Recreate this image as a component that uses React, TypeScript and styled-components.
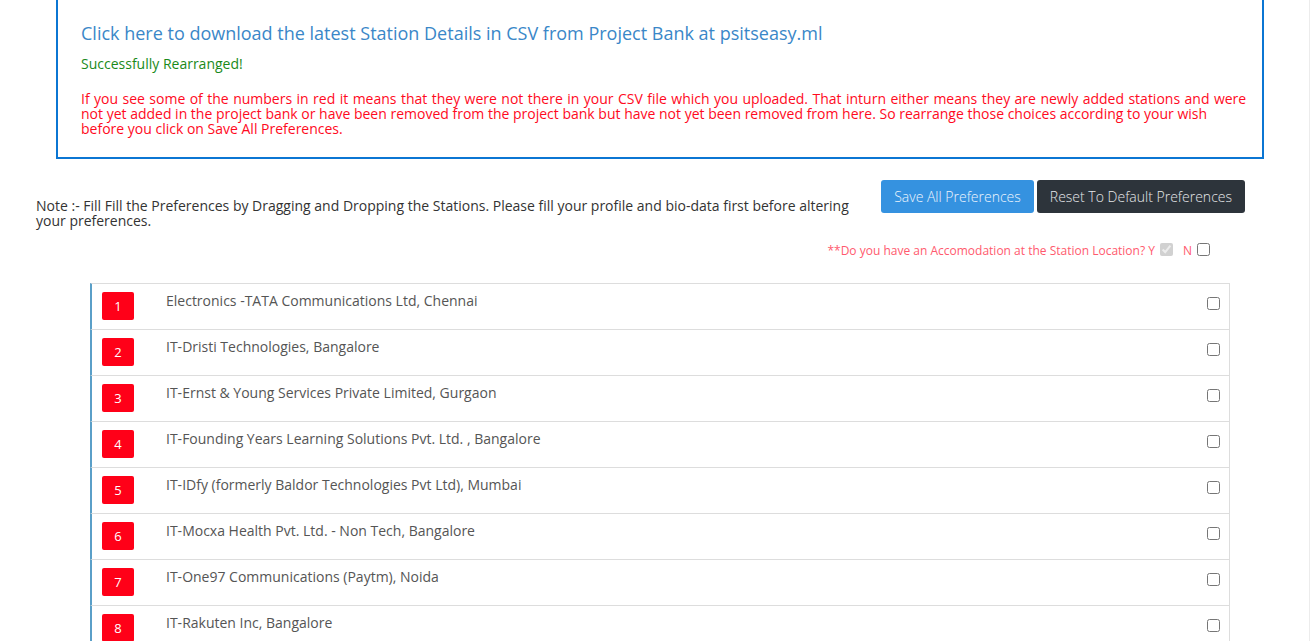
import React from "react";
import styled, { createGlobalStyle } from "styled-components";

const Global = createGlobalStyle`
  html, body { margin: 0; padding: 0; background: #fff; }
  body { font-family: "Open Sans", "Liberation Sans", sans-serif; color: #333; }
  * { box-sizing: border-box; }
`;

const Page = styled.div`
  width: 1310px;
  min-height: 100vh;
  border-right: 1px solid #ececec;
  overflow: hidden;
`;

const InfoBox = styled.div`
  margin-left: 56px;
  width: 1208px;
  border: 2px solid #0b76d3;
  border-top: none;
  padding: 20px 10px 21px 23px;
`;

const DownloadLink = styled.a`
  display: block;
  font-size: 18px;
  line-height: 26px;
  color: #3a87c8;
  text-decoration: none;
  cursor: pointer;
`;

const Success = styled.div`
  margin-top: 8px;
  font-size: 14px;
  line-height: 20px;
  color: #1a8a1a;
`;

const Warning = styled.p`
  margin: 17px 0 0;
  font-size: 14px;
  line-height: 15px;
  color: #ff0a1e;
  white-space: nowrap;
`;

const FirstLine = styled.span`
  word-spacing: 0.8px;
`;

const ActionRow = styled.div`
  display: flex;
  align-items: flex-start;
  padding: 21px 0 0 36px;
  width: 1245px;
`;

const Note = styled.p`
  margin: 18px 0 0;
  width: 840px;
  font-size: 14px;
  line-height: 15px;
  color: #333;
`;

const Buttons = styled.div`
  margin-left: auto;
  display: flex;
  flex: none;
  gap: 3px;
`;

const Button = styled.button<{ $variant: "primary" | "dark" }>`
  height: 33px;
  padding: 0 13px;
  border: none;
  border-radius: 3px;
  white-space: nowrap;
  font-family: "Open Sans", "Liberation Sans", sans-serif;
  font-size: 14px;
  font-weight: 300;
  color: ${(p) => (p.$variant === "primary" ? "#eef5fd" : "#e6e8ea")};
  background: ${(p) => (p.$variant === "primary" ? "#3592e0" : "#2d343b")};
  cursor: pointer;
`;

const AccomRow = styled.div`
  display: flex;
  justify-content: flex-end;
  align-items: center;
  width: 1210px;
  margin-top: 14px;
  font-size: 12px;
  line-height: 17px;
  color: #ff5a6e;
`;

const SmallCheck = styled.input`
  width: 13px;
  height: 13px;
  margin: -3px 0 0 5px;
`;

const NLabel = styled.span`
  margin-left: 10px;
`;

const List = styled.ul`
  list-style: none;
  margin: 24px 0 0 90px;
  padding: 0;
  width: 1140px;
`;

const Row = styled.li`
  display: flex;
  align-items: flex-start;
  height: 46px;
  padding: 8px 0 0 10px;
  border-left: 2px solid #5a9fc8;
  border-right: 1px solid #ddd;
  border-top: 1px solid #ddd;
`;

const Badge = styled.span<{ $red: boolean }>`
  display: flex;
  align-items: center;
  justify-content: center;
  width: 32px;
  height: 28px;
  flex: none;
  border-radius: 2px;
  background: ${(p) => (p.$red ? "#ff0018" : "#5a9fc8")};
  color: #fff;
  font-size: 13px;
`;

const Station = styled.span`
  margin: -1px 0 0 32px;
  flex: 1;
  font-size: 14px;
  line-height: 20px;
  color: #555;
`;

const RowCheck = styled.input`
  width: 13px;
  height: 13px;
  margin: 5px 9px 0 0;
`;

const stations = [
  "Electronics -TATA Communications Ltd, Chennai",
  "IT-Dristi Technologies, Bangalore",
  "IT-Ernst & Young Services Private Limited, Gurgaon",
  "IT-Founding Years Learning Solutions Pvt. Ltd. , Bangalore",
  "IT-IDfy (formerly Baldor Technologies Pvt Ltd), Mumbai",
  "IT-Mocxa Health Pvt. Ltd. - Non Tech, Bangalore",
  "IT-One97 Communications (Paytm), Noida",
  "IT-Rakuten Inc, Bangalore",
];

export default function App() {
  return (
    <Page>
      <Global />
      <InfoBox>
        <DownloadLink>
          Click here to download the latest Station Details in CSV from Project Bank at psitseasy.ml
        </DownloadLink>
        <Success>Successfully Rearranged!</Success>
        <Warning>
          <FirstLine>
            If you see some of the numbers in red it means that they were not there in your CSV file which you uploaded. That inturn either means they are newly added stations and were
          </FirstLine>
          <br />
          not yet added in the project bank or have been removed from the project bank but have not yet been removed from here. So rearrange those choices according to your wish
          <br />
          before you click on Save All Preferences.
        </Warning>
      </InfoBox>
      <ActionRow>
        <Note>
          Note :- Fill Fill the Preferences by Dragging and Dropping the Stations. Please fill your profile and bio-data first before altering your preferences.
        </Note>
        <Buttons>
          <Button $variant="primary">Save All Preferences</Button>
          <Button $variant="dark">Reset To Default Preferences</Button>
        </Buttons>
      </ActionRow>
      <AccomRow>
        **Do you have an Accomodation at the Station Location? Y
        <SmallCheck type="checkbox" checked disabled readOnly />
        <NLabel>N</NLabel>
        <SmallCheck type="checkbox" />
      </AccomRow>
      <List>
        {stations.map((s, i) => (
          <Row key={s}>
            <Badge $red>{i + 1}</Badge>
            <Station>{s}</Station>
            <RowCheck type="checkbox" />
          </Row>
        ))}
      </List>
    </Page>
  );
}
